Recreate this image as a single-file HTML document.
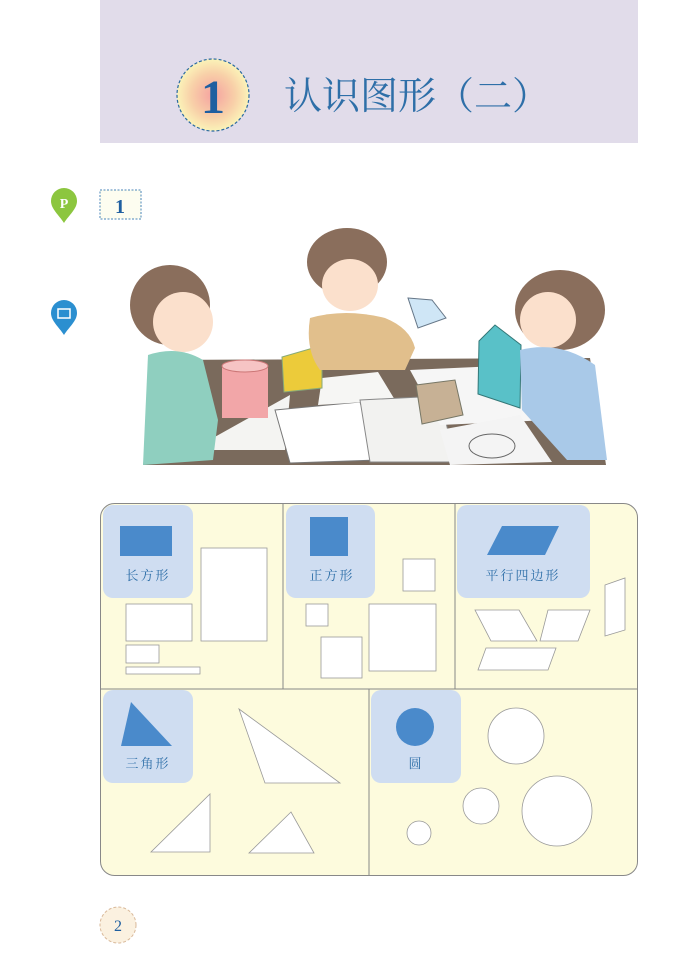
<!DOCTYPE html>
<html><head><meta charset="utf-8"><style>
html,body{margin:0;padding:0;background:#fff;}
body{width:686px;height:968px;overflow:hidden;}
svg text{font-family:"Liberation Serif","Noto Serif CJK SC",serif;}
</style></head><body>
<svg width="686" height="968" viewBox="0 0 686 968" xmlns="http://www.w3.org/2000/svg">
<defs>
<radialGradient id="bg1" cx="50%" cy="50%" r="50%">
<stop offset="0" stop-color="#f5a2a0"/><stop offset="0.6" stop-color="#f8cfa8"/><stop offset="1" stop-color="#fbf3b8"/>
</radialGradient>
</defs>
<rect x="100" y="0" width="538" height="143" fill="#e1dcea"/>
<circle cx="213" cy="95" r="36" fill="url(#bg1)" stroke="#2a6aa0" stroke-width="1.2" stroke-dasharray="3 2"/>
<text x="213" y="113" font-size="48" fill="#1f5fa0" text-anchor="middle" font-weight="bold">1</text>
<text x="284" y="109" font-size="38" fill="#2e6fa8" style="font-family:'Liberation Serif','Noto Serif CJK SC',serif">认识图形（二）</text>

<path d="M64 188 a13 13 0 0 1 13 13 c0 8 -8 14 -13 22 c-5 -8 -13 -14 -13 -22 a13 13 0 0 1 13 -13z" fill="#8cc63f"/>
<text x="64" y="208" font-size="14" fill="#fff" text-anchor="middle" font-weight="bold">P</text>
<path d="M64 300 a13 13 0 0 1 13 13 c0 8 -8 14 -13 22 c-5 -8 -13 -14 -13 -22 a13 13 0 0 1 13 -13z" fill="#2b8fd0"/>
<rect x="58" y="309" width="12" height="9" fill="none" stroke="#fff" stroke-width="1.5"/>
<rect x="100" y="190" width="41" height="29" fill="#fdfdf0" stroke="#4a86b8" stroke-dasharray="2 1.5"/>
<text x="120" y="213" font-size="20" fill="#1f5fa0" text-anchor="middle" font-weight="bold">1</text>

<polygon points="160,360 590,358 606,465 143,465" fill="#7a6a5c"/>
<polygon points="195,448 290,395 285,450 180,450" fill="#f4f4f2"/>
<polygon points="275,410 360,402 378,460 290,463" fill="#fff" stroke="#777"/>
<polygon points="322,378 378,372 395,400 318,405" fill="#f6f6f4"/>
<polygon points="360,400 440,396 455,462 370,462" fill="#f2f2f0" stroke="#888"/>
<polygon points="410,370 520,365 550,420 440,425" fill="#f6f6f6"/>
<polygon points="440,430 520,415 552,462 450,465" fill="#f4f4f4"/>
<ellipse cx="492" cy="446" rx="23" ry="12" fill="none" stroke="#666"/>
<rect x="222" y="366" width="46" height="52" fill="#f2a6a8"/>
<ellipse cx="245" cy="366" rx="23" ry="6" fill="#f6c4c4" stroke="#c77"/>
<polygon points="282,357 313,348 322,352 322,388 284,392" fill="#eccb3a" stroke="#8a7"/>
<polygon points="416,385 455,380 463,415 422,424" fill="#c7b195" stroke="#776"/>
<polygon points="479,341 495,325 521,345 520,408 478,394" fill="#59c1c8" stroke="#377"/>
<polygon points="408,298 432,300 446,318 418,328" fill="#cfe6f6" stroke="#678"/>
<ellipse cx="170" cy="305" rx="40" ry="40" fill="#8a6e5c"/>
<ellipse cx="183" cy="322" rx="30" ry="30" fill="#fbe0cc"/>
<path d="M148 355 q30 -10 55 5 l15 60 l-5 40 l-70 5 z" fill="#8fcfbf"/>
<ellipse cx="347" cy="262" rx="40" ry="34" fill="#8a6e5c"/>
<ellipse cx="350" cy="285" rx="28" ry="26" fill="#fbe0cc"/>
<path d="M310 318 q35 -10 75 0 q25 10 30 30 l-10 22 l-85 0 q-15 -20 -10 -52z" fill="#e1bf8c"/>
<ellipse cx="560" cy="310" rx="45" ry="40" fill="#8a6e5c"/>
<ellipse cx="548" cy="320" rx="28" ry="28" fill="#fbe0cc"/>
<path d="M520 350 q40 -10 75 15 l12 95 l-40 0 l-45 -50 z" fill="#a9c9e8"/>

<rect x="100.5" y="503.5" width="537" height="372" rx="14" fill="#fdfbdd" stroke="#888"/>
<line x1="100" y1="689" x2="638" y2="689" stroke="#888"/>
<line x1="283" y1="504" x2="283" y2="689" stroke="#888"/>
<line x1="455" y1="504" x2="455" y2="689" stroke="#888"/>
<line x1="369" y1="689" x2="369" y2="876" stroke="#888"/>
<g fill="#cfddf1">
<rect x="103" y="505" width="90" height="93" rx="10"/>
<rect x="286" y="505" width="89" height="93" rx="10"/>
<rect x="457" y="505" width="133" height="93" rx="10"/>
<rect x="103" y="690" width="90" height="93" rx="10"/>
<rect x="371" y="690" width="90" height="93" rx="10"/>
</g>
<g fill="#4a8acb">
<rect x="120" y="526" width="52" height="30"/>
<rect x="310" y="517" width="38" height="39"/>
<polygon points="487,555 502,526 559,526 545,555"/>
<polygon points="121,746 131,702 172,746"/>
<circle cx="415" cy="727" r="19"/>
</g>
<g font-size="13" fill="#2e6fa8" text-anchor="middle" style="font-family:'Liberation Serif','Noto Serif CJK SC',serif" letter-spacing="2">
<text x="148" y="580">长方形</text>
<text x="332" y="580">正方形</text>
<text x="523" y="580">平行四边形</text>
<text x="148" y="768">三角形</text>
<text x="416" y="768">圆</text>
</g>
<g fill="#fff" stroke="#999" stroke-width="0.8">
<rect x="201" y="548" width="66" height="93"/>
<rect x="126" y="604" width="66" height="37"/>
<rect x="126" y="645" width="33" height="18"/>
<rect x="126" y="667" width="74" height="7"/>
<rect x="403" y="559" width="32" height="32"/>
<rect x="306" y="604" width="22" height="22"/>
<rect x="321" y="637" width="41" height="41"/>
<rect x="369" y="604" width="67" height="67"/>
<polygon points="475,610 519,610 537,641 491,641"/>
<polygon points="548,610 590,610 578,641 540,641"/>
<polygon points="486,648 556,648 548,670 478,670"/>
<polygon points="605,585 625,578 625,630 605,636"/>
<polygon points="239,709 340,783 265,783"/>
<polygon points="151,852 210,852 210,794"/>
<polygon points="249,853 314,853 291,812"/>
<circle cx="516" cy="736" r="28"/>
<circle cx="557" cy="811" r="35"/>
<circle cx="481" cy="806" r="18"/>
<circle cx="419" cy="833" r="12"/>
</g>

<circle cx="118" cy="925" r="18" fill="#fbf1e0" stroke="#d9b99a" stroke-dasharray="3 2"/>
<text x="118" y="931" font-size="16" fill="#1f5fa0" text-anchor="middle">2</text>
</svg>
</body></html>
